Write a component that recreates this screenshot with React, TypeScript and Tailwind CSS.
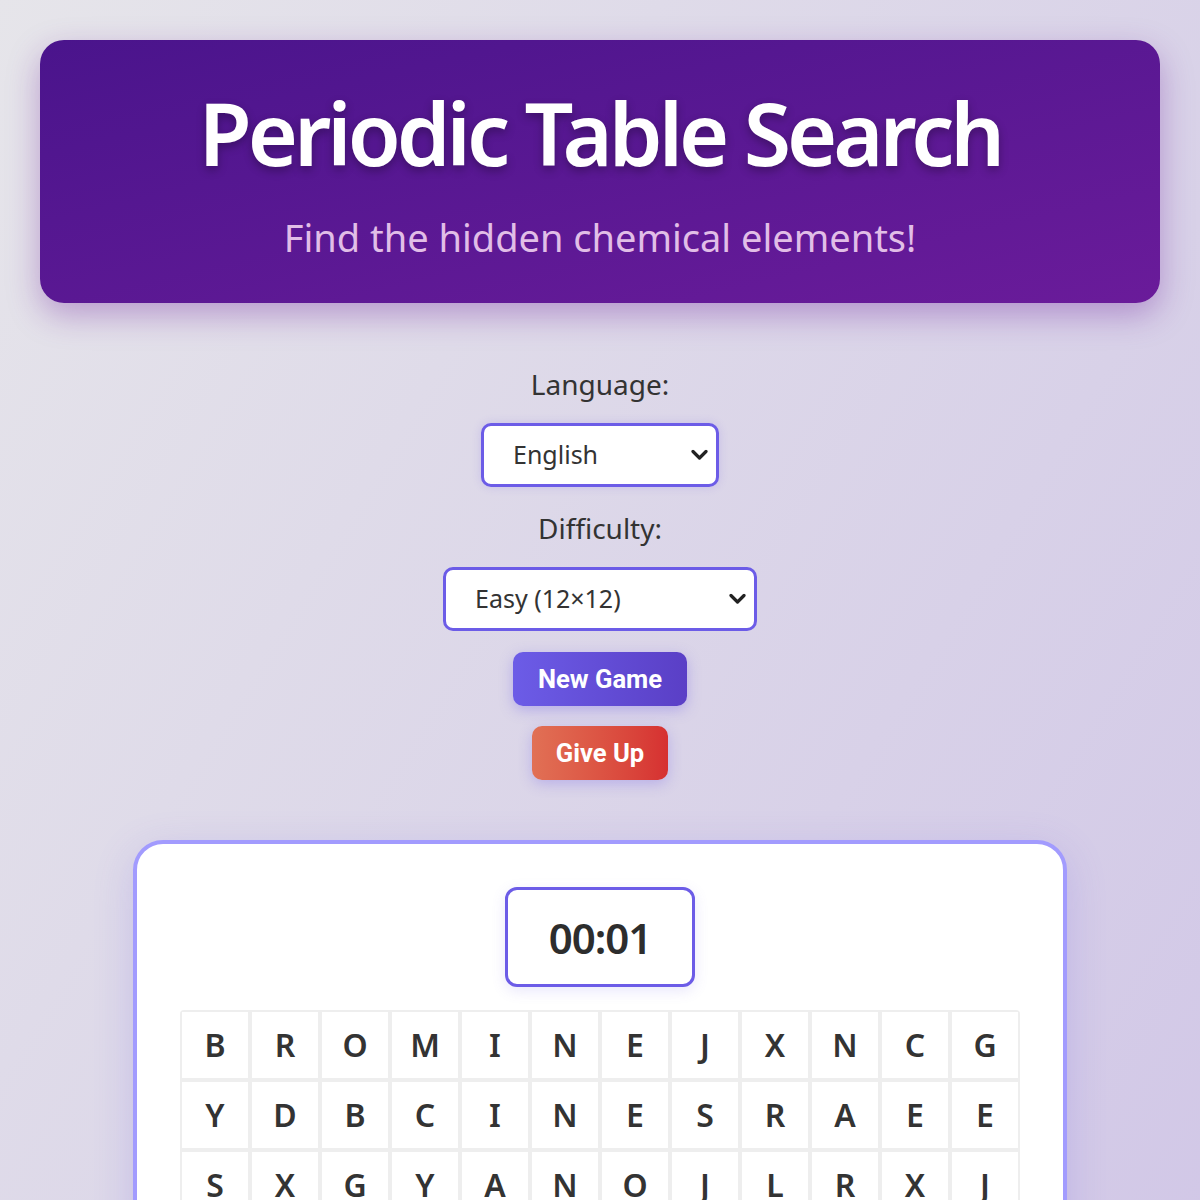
import React from "react";

const rows: string[] = [
  "BROMINEJXNCG",
  "YDBCINESRAEE",
  "SXGYANOJLRXJ",
  "TIRONKCOPPER",
  "HELIUMAZINCQ",
  "OXYGENWTINLU",
  "SODIUMKGOLDV",
  "CARBONFNEONP",
  "LEADHSILVERT",
  "ARGONUCALCIU",
  "MERCURYBORON",
  "NICKELZSULFR",
];

function Chevron() {
  return (
    <svg width="17" height="11" viewBox="0 0 17 11" className="absolute right-[11px] top-1/2 -translate-y-1/2 pointer-events-none">
      <polyline points="2,2 8.5,8.5 15,2" fill="none" stroke="#222" strokeWidth="3.2" strokeLinecap="round" strokeLinejoin="round" />
    </svg>
  );
}

export default function App() {
  const sans = "font-['Noto_Sans','Open_Sans',sans-serif]";
  return (
    <div className={`min-h-[1200px] w-full bg-gradient-to-br from-[#e6e5ea] to-[#cdc1e6] p-[40px] ${sans}`}>
      <header className="h-[263px] w-full rounded-[24px] bg-gradient-to-br from-[#4a148c] to-[#6a1b9a] pt-[43px] text-center shadow-[0_12px_32px_rgba(106,27,154,0.35)]">
        <h1 className="text-[86px] font-semibold leading-[100px] tracking-[-4px] text-white [text-shadow:0_4px_10px_rgba(0,0,0,0.3)]">
          Periodic Table Search
        </h1>
        <p className="mt-[29px] text-[38px] font-normal leading-[50px] text-[#e1bee7]">
          Find the hidden chemical elements!
        </p>
      </header>

      <div className="mt-[61px] flex flex-col items-center">
        <label className="text-[28px] leading-[40px] text-[#333]">Language:</label>
        <div className="relative mt-[19px]">
          <select className="h-[64px] w-[238px] appearance-none rounded-[10px] border-[3px] border-[#6c5ce7] bg-white pl-[29px] text-[25px] text-[#333] outline-none shadow-[0_0_10px_rgba(108,92,231,0.2)]">
            <option>English</option>
          </select>
          <Chevron />
        </div>
        <label className="mt-[21px] text-[28px] leading-[40px] text-[#333]">Difficulty:</label>
        <div className="relative mt-[19px]">
          <select className="h-[64px] w-[314px] appearance-none rounded-[10px] border-[3px] border-[#6c5ce7] bg-white pl-[29px] text-[25px] text-[#333] outline-none">
            <option>Easy (12×12)</option>
          </select>
          <Chevron />
        </div>
        <button className="mt-[21px] flex h-[54px] items-center rounded-[10px] bg-gradient-to-r from-[#6c5ce7] to-[#5a3fc6] px-[25px] font-['Roboto',sans-serif] text-[25.6px] font-bold text-white shadow-[0_4px_14px_rgba(108,92,231,0.35)]">
          New Game
        </button>
        <button className="mt-[20px] flex h-[54px] items-center rounded-[10px] bg-gradient-to-r from-[#e17055] to-[#d63031] px-[24px] font-['Roboto',sans-serif] text-[25.6px] font-bold text-white shadow-[0_4px_14px_rgba(108,92,231,0.3)]">
          Give Up
        </button>

        <div className="mt-[60px] w-[934px] rounded-[30px] border-[4px] border-[#a29bfe] bg-white p-[43px] shadow-[0_10px_40px_rgba(108,92,231,0.2)]">
          <div className="flex flex-col items-center">
            <div className="flex h-[100px] w-[190px] items-center justify-center rounded-[12px] border-[3px] border-[#6c5ce7] bg-white shadow-[0_4px_14px_rgba(108,92,231,0.15)]">
              <span className="text-[42px] font-semibold tracking-[-1px] text-[#2d2d2d]">00:01</span>
            </div>
            <div className="mt-[23px] grid grid-cols-[repeat(12,66px)] gap-[4px] rounded-[4px] bg-[#eeeeee] p-[2px]">
              {rows.map((r, i) =>
                r.split("").map((ch, j) => (
                  <div
                    key={`${i}-${j}`}
                    className="flex h-[66px] w-[66px] items-center justify-center bg-white text-[32px] font-semibold text-[#333]"
                  >
                    {ch}
                  </div>
                ))
              )}
            </div>
          </div>
        </div>
      </div>
    </div>
  );
}
